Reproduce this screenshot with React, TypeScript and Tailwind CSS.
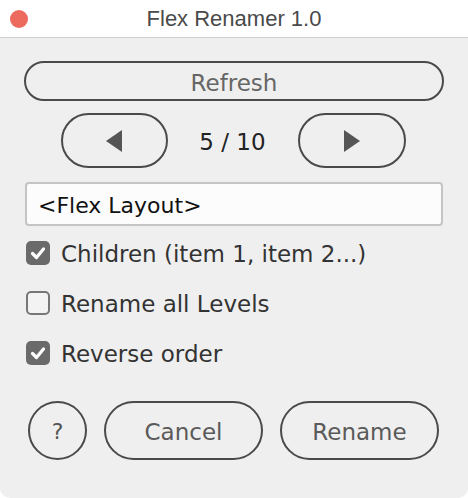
import React from "react";

const body = { fontFamily: '"DejaVu Sans", sans-serif' };

function Check({ checked, label }: { checked: boolean; label: string }) {
  return (
    <div className="flex items-center h-[24px] pl-[2px]">
      {checked ? (
        <div className="w-[24px] h-[24px] rounded-[5px] bg-[#6a6a6a] flex items-center justify-center">
          <svg width="24" height="24" viewBox="0 0 24 24">
            <path d="M6.5 12.5 L10.5 16.5 L17.5 8" fill="none" stroke="#ffffff" strokeWidth="3.2" strokeLinecap="round" strokeLinejoin="round" />
          </svg>
        </div>
      ) : (
        <div className="w-[24px] h-[24px] rounded-[5px] border-2 border-[#777777] bg-[#f3f3f3]" />
      )}
      <span className="ml-[11px] pt-[3px] text-[23px] text-[#333333] leading-none" style={body}>
        {label}
      </span>
    </div>
  );
}

export default function App() {
  return (
    <div className="w-[468px] h-[498px] bg-white">
      <div className="w-[468px] h-[498px] bg-[#efefef] rounded-b-[10px] overflow-hidden flex flex-col">
        <div className="relative h-[38px] bg-white border-b border-[#cfcfcf] flex items-center justify-center shrink-0">
          <div className="absolute left-[10px] top-[10px] w-[18px] h-[18px] rounded-full bg-[#ec6a5e]" />
          <span className="pt-[1px] text-[22px] text-[#4a4a4a] leading-none" style={{ fontFamily: '"Liberation Sans", Arial, sans-serif' }}>
            Flex Renamer 1.0
          </span>
        </div>
        <div className="flex flex-col px-[24px] pt-[23px]">
          <div className="h-[40px] w-[420px] pt-[4px] rounded-full border-2 border-[#4a4a4a] flex items-center justify-center text-[23px] text-[#666666] leading-none" style={body}>
            Refresh
          </div>
          <div className="mt-[12px] h-[55px] flex items-center justify-center gap-[30px] pr-[2px]">
            <div className="w-[107px] h-[55px] rounded-full border-2 border-[#4a4a4a] flex items-center justify-center">
              <svg width="16" height="22" viewBox="0 0 16 22">
                <polygon points="16,0 16,22 0,11" fill="#555555" />
              </svg>
            </div>
            <span className="pt-[4px] text-[23px] text-[#222222] leading-none w-[70px] text-center" style={body}>
              5 / 10
            </span>
            <div className="w-[108px] h-[55px] rounded-full border-2 border-[#4a4a4a] flex items-center justify-center">
              <svg width="16" height="22" viewBox="0 0 16 22">
                <polygon points="0,0 0,22 16,11" fill="#555555" />
              </svg>
            </div>
          </div>
          <div className="mt-[14px] ml-[1px] h-[44px] w-[418px] rounded-[4px] border-2 border-[#c4c4c4] bg-[#fcfcfc] flex items-center pl-[11px] pt-[3px] text-[22px] text-[#111111] leading-none" style={body}>
            &lt;Flex Layout&gt;
          </div>
          <div className="mt-[15px]">
            <Check checked label="Children (item 1, item 2...)" />
          </div>
          <div className="mt-[26px]">
            <Check checked={false} label="Rename all Levels" />
          </div>
          <div className="mt-[26px]">
            <Check checked label="Reverse order" />
          </div>
          <div className="mt-[36px] flex items-center gap-[17px] pl-[4px]">
            <div className="w-[59px] h-[59px] pt-[3px] rounded-full border-2 border-[#4a4a4a] flex items-center justify-center text-[22px] text-[#555555] leading-none" style={body}>
              ?
            </div>
            <div className="w-[159px] h-[59px] pt-[4px] rounded-full border-2 border-[#4a4a4a] flex items-center justify-center text-[23px] text-[#5a5a5a] leading-none" style={body}>
              Cancel
            </div>
            <div className="w-[159px] h-[59px] pt-[4px] rounded-full border-2 border-[#4a4a4a] flex items-center justify-center text-[23px] text-[#5a5a5a] leading-none" style={body}>
              Rename
            </div>
          </div>
        </div>
      </div>
    </div>
  );
}
